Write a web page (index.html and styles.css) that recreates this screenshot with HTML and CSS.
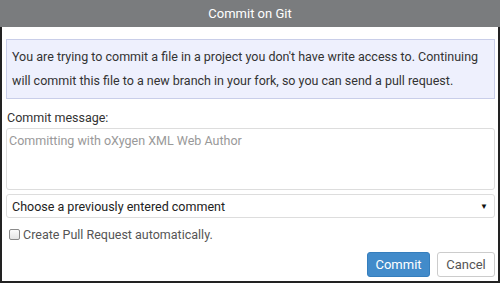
FILE: index.html
```html
<!DOCTYPE html>
<html>
<head>
<meta charset="utf-8">
<link rel="stylesheet" href="styles.css">
</head>
<body>
<div class="dialog">
  <div class="title">Commit on Git</div>
  <div class="body">
    <div class="info">You are trying to commit a file in a project you don't have write access to. Continuing will commit this file to a new branch in your fork, so you can send a pull request.</div>
    <div class="label">Commit message:</div>
    <textarea class="message" placeholder="Committing with oXygen XML Web Author"></textarea>
    <div class="select"><span>Choose a previously entered comment</span><span class="arrow">▼</span></div>
    <label class="check"><span class="box"></span><span>Create Pull Request automatically.</span></label>
    <div class="buttons">
      <button class="btn primary">Commit</button>
      <button class="btn cancel">Cancel</button>
    </div>
  </div>
</div>
</body>
</html>
```
FILE: styles.css
```css
html, body {
  margin: 0;
  padding: 0;
  background: #fff;
}
.dialog {
  width: 500px;
  height: 283px;
  box-sizing: border-box;
  display: flex;
  flex-direction: column;
  overflow: hidden;
  font-family: Roboto, "Liberation Sans", sans-serif;
  font-size: 12.5px;
  color: #333;
}
.title {
  height: 27px;
  line-height: 27px;
  background: #7a7c7e;
  color: #fff;
  text-align: center;
  font-size: 13px;
  flex: none;
}
.body {
  flex: 1;
  min-height: 0;
  border: 2px solid #222;
  border-top: none;
  padding: 12px 3px 0 4px;
  display: flex;
  flex-direction: column;
}
.info {
  background: #eef0fd;
  border: 1px solid #c9cee9;
  padding: 5px 5px;
  line-height: 24px;
  color: #333;
}
.label {
  margin-top: 11px;
  line-height: 16px;
  color: #333;
  padding-left: 1px;
}
.message {
  margin: 2px 0 0;
  height: 62px;
  flex: none;
  box-sizing: border-box;
  border: 1px solid #ddd;
  border-radius: 3px;
  resize: none;
  padding: 4px 2px;
  font-family: Roboto, "Liberation Sans", sans-serif;
  font-size: 12.5px;
  color: #333;
  outline: none;
}
.message::placeholder {
  color: #999;
}
.select {
  margin-top: 4px;
  height: 24px;
  flex: none;
  box-sizing: border-box;
  border: 1px solid #ddd;
  border-radius: 3px;
  display: flex;
  align-items: center;
  justify-content: space-between;
  padding: 0 6px 0 5px;
  color: #222;
}
.arrow {
  font-size: 8px;
  color: #111;
}
.check {
  margin-top: 9px;
  line-height: 15px;
  display: flex;
  align-items: center;
  color: #555;
  padding-left: 3px;
}
.box {
  width: 9px;
  height: 9px;
  border: 1px solid #8a8a8a;
  border-radius: 2px;
  background: linear-gradient(#fbfbfb, #e4e4e4);
  margin-right: 3px;
}
.buttons {
  margin-top: auto;
  margin-bottom: 4px;
  display: flex;
  justify-content: flex-end;
  gap: 7px;
}
.btn {
  height: 25px;
  box-sizing: border-box;
  border: 1px solid #ccc;
  border-radius: 3px;
  background: #fff;
  color: #555;
  font-family: Roboto, "Liberation Sans", sans-serif;
  font-size: 13px;
  padding: 0;
}
.primary {
  width: 63px;
  background: #428bca;
  border-color: #357ebd;
  color: #fff;
}
.cancel {
  width: 58px;
}
```
